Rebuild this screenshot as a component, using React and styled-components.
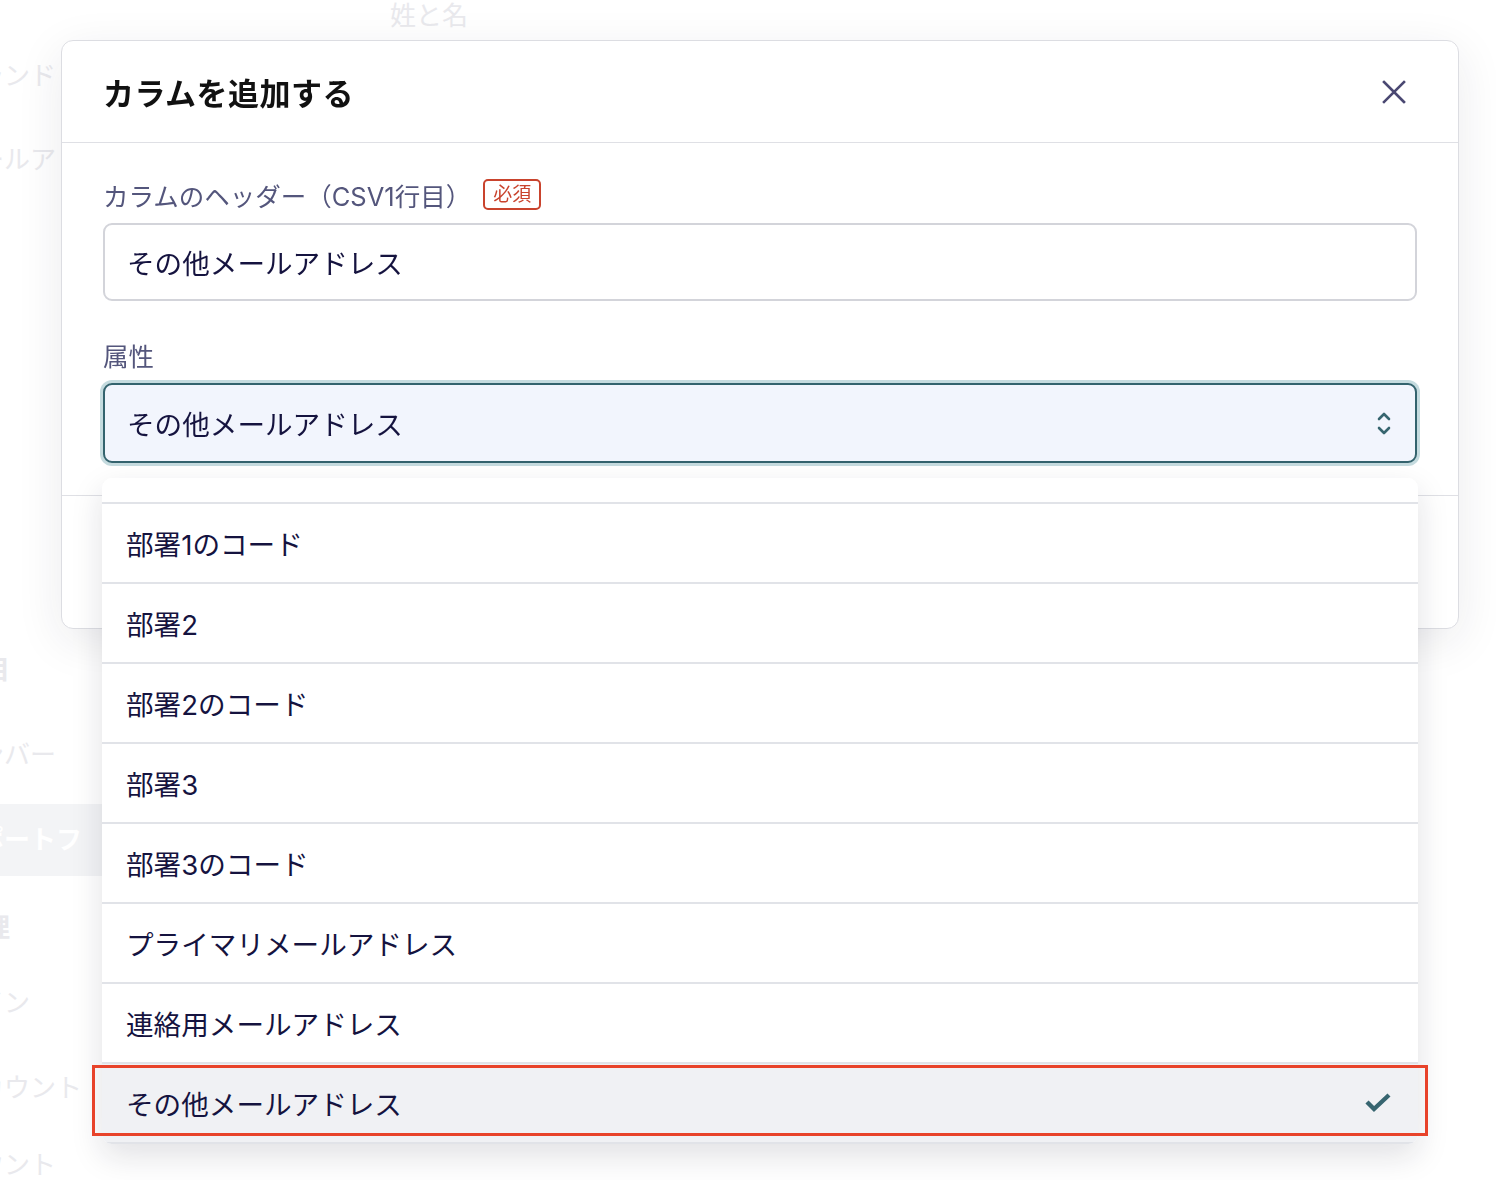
import styled, { createGlobalStyle } from 'styled-components'

const GlobalStyle = createGlobalStyle`
  html, body {
    margin: 0;
    padding: 0;
    background: #ffffff;
  }
  body {
    font-family: "Inter", "Noto Sans CJK JP", sans-serif;
    color: #15133f;
    overflow: hidden;
  }
  * {
    box-sizing: border-box;
  }
`

const sideItems = [
  { text: 'ランド', center: 76 },
  { text: 'ールア', center: 160 },
  { text: '目', center: 670, bold: true },
  { text: 'ンバー', center: 755 },
  { text: 'ポートフ', center: 840, active: true },
  { text: '理', center: 928, bold: true },
  { text: 'イン', center: 1003 },
  { text: 'カウント', center: 1088 },
  { text: 'ウント', center: 1165 },
]

const options = [
  '部署1',
  '部署1のコード',
  '部署2',
  '部署2のコード',
  '部署3',
  '部署3のコード',
  'プライマリメールアドレス',
  '連絡用メールアドレス',
  'その他メールアドレス',
]

const selected = 'その他メールアドレス'

const Page = styled.div`
  display: flex;
  height: 1180px;
  overflow: hidden;
`

const Sidebar = styled.nav`
  width: 200px;
  margin-left: -22px;
  display: flex;
  flex-direction: column;
`

const SideItem = styled.div`
  height: 72px;
  line-height: 72px;
  margin-top: ${p => p.$gap}px;
  padding-left: ${p => (p.$bold ? 6 : 0)}px;
  font-size: 26px;
  white-space: nowrap;
  font-weight: ${p => (p.$bold || p.$active ? 700 : 400)};
  color: ${p => (p.$active ? '#ffffff' : '#e9e9ed')};
  background: ${p => (p.$active ? '#f3f4f6' : 'transparent')};
`

const Main = styled.main`
  flex: 1;
  padding-left: 212px;
`

const ColumnHead = styled.div`
  font-size: 26px;
  line-height: 32px;
  color: #e9e9ed;
`

const Overlay = styled.div`
  position: fixed;
  inset: 0;
  padding: 40px 37px 0 61px;
`

const Dialog = styled.section`
  background: #ffffff;
  border: 1px solid #dcdde2;
  border-radius: 12px;
  box-shadow: 0 12px 48px rgba(30, 30, 60, 0.09);
`

const Header = styled.header`
  height: 102px;
  display: flex;
  align-items: center;
  justify-content: space-between;
  padding: 0 48px 0 41px;
  border-bottom: 1px solid #dfe0e5;
`

const Title = styled.h2`
  margin: 0;
  font-size: 31px;
  font-weight: 700;
  color: #111111;
  letter-spacing: 0.5px;
`

const CloseButton = styled.button`
  width: 32px;
  height: 32px;
  padding: 0;
  border: none;
  background: none;
  display: flex;
  align-items: center;
  justify-content: center;
  cursor: pointer;
`

const Body = styled.div`
  padding: 36px 41px 32px 41px;
  display: flex;
  flex-direction: column;
  gap: 38px;
  border-bottom: 1px solid #dfe0e5;
`

const Footer = styled.footer`
  height: 132px;
`

const Field = styled.div`
  display: flex;
  flex-direction: column;
  gap: 14px;
`

const Label = styled.label`
  display: flex;
  align-items: center;
  gap: 12px;
  height: 30px;
  font-size: 25.5px;
  color: #54567c;
`

const Badge = styled.span`
  height: 31px;
  padding: 0 8px;
  border: 2px solid #c9432d;
  border-radius: 5px;
  font-size: 19px;
  line-height: 27px;
  color: #c9432d;
`

const TextInput = styled.div`
  height: 78px;
  display: flex;
  align-items: center;
  padding: 0 22px;
  border: 2px solid #d3d4da;
  border-radius: 9px;
  font-size: 27.6px;
  color: #15133f;
`

const SelectWrap = styled.div`
  position: relative;
`

const SelectBox = styled.div`
  height: 80px;
  display: flex;
  align-items: center;
  justify-content: space-between;
  padding: 0 24px 0 22px;
  background: #f2f5fd;
  border: 2px solid #34636e;
  border-radius: 9px;
  box-shadow: 0 0 0 3px #c5dbdf;
  font-size: 27.6px;
  color: #15133f;
`

const Dropdown = styled.div`
  position: absolute;
  top: 95px;
  left: -1px;
  right: -1px;
  height: 666px;
  background: #ffffff;
  border-radius: 10px;
  box-shadow: 0 12px 32px rgba(20, 20, 50, 0.13);
  z-index: 2;
`

const ListClip = styled.div`
  height: 100%;
  overflow: hidden;
  border-radius: 10px;
`

const List = styled.ul`
  list-style: none;
  margin: -54px 0 0;
  padding: 0;
`

const Option = styled.li`
  height: 80px;
  display: flex;
  align-items: center;
  justify-content: space-between;
  padding: 0 26px 0 24px;
  border-bottom: 2px solid #e1e3e8;
  font-size: 27.6px;
  color: #15133f;
  background: ${p => (p.$selected ? '#f0f1f4' : '#ffffff')};
`

const Marker = styled.div`
  position: absolute;
  left: -10px;
  right: -10px;
  bottom: 8px;
  height: 71px;
  border: 3px solid #e8432a;
  pointer-events: none;
`

export default function App() {
  let prevBottom = 0
  return (
    <>
      <GlobalStyle />
      <Page>
        <Sidebar>
          {sideItems.map(item => {
            const gap = item.center - 36 - prevBottom
            prevBottom = item.center + 36
            return (
              <SideItem key={item.text} $gap={gap} $bold={item.bold} $active={item.active}>
                {item.text}
              </SideItem>
            )
          })}
        </Sidebar>
        <Main>
          <ColumnHead>姓と名</ColumnHead>
        </Main>
      </Page>

      <Overlay>
        <Dialog>
          <Header>
            <Title>カラムを追加する</Title>
            <CloseButton aria-label="閉じる">
              <svg width="24" height="24" viewBox="0 0 24 24">
                <path d="M2 2 L22 22 M22 2 L2 22" stroke="#4a4872" strokeWidth="2.6" strokeLinecap="square" fill="none" />
              </svg>
            </CloseButton>
          </Header>
          <Body>
            <Field>
              <Label>
                カラムのヘッダー（CSV1行目）
                <Badge>必須</Badge>
              </Label>
              <TextInput>その他メールアドレス</TextInput>
            </Field>
            <Field>
              <Label>属性</Label>
              <SelectWrap>
                <SelectBox>
                  <span>{selected}</span>
                  <svg width="14" height="26" viewBox="0 0 14 26">
                    <polyline points="2,9 7,4 12,9" stroke="#37656f" strokeWidth="2.6" fill="none" strokeLinecap="round" strokeLinejoin="round" />
                    <polyline points="2,18 7,23 12,18" stroke="#37656f" strokeWidth="2.6" fill="none" strokeLinecap="round" strokeLinejoin="round" />
                  </svg>
                </SelectBox>
                <Dropdown>
                  <ListClip>
                    <List>
                      {options.map(opt => (
                        <Option key={opt} $selected={opt === selected}>
                          <span>{opt}</span>
                          {opt === selected && (
                            <svg width="28" height="24" viewBox="0 0 28 24">
                              <polyline points="3,11 10,18 25,4" stroke="#376570" strokeWidth="4.4" fill="none" />
                            </svg>
                          )}
                        </Option>
                      ))}
                    </List>
                  </ListClip>
                  <Marker />
                </Dropdown>
              </SelectWrap>
            </Field>
          </Body>
          <Footer />
        </Dialog>
      </Overlay>
    </>
  )
}
